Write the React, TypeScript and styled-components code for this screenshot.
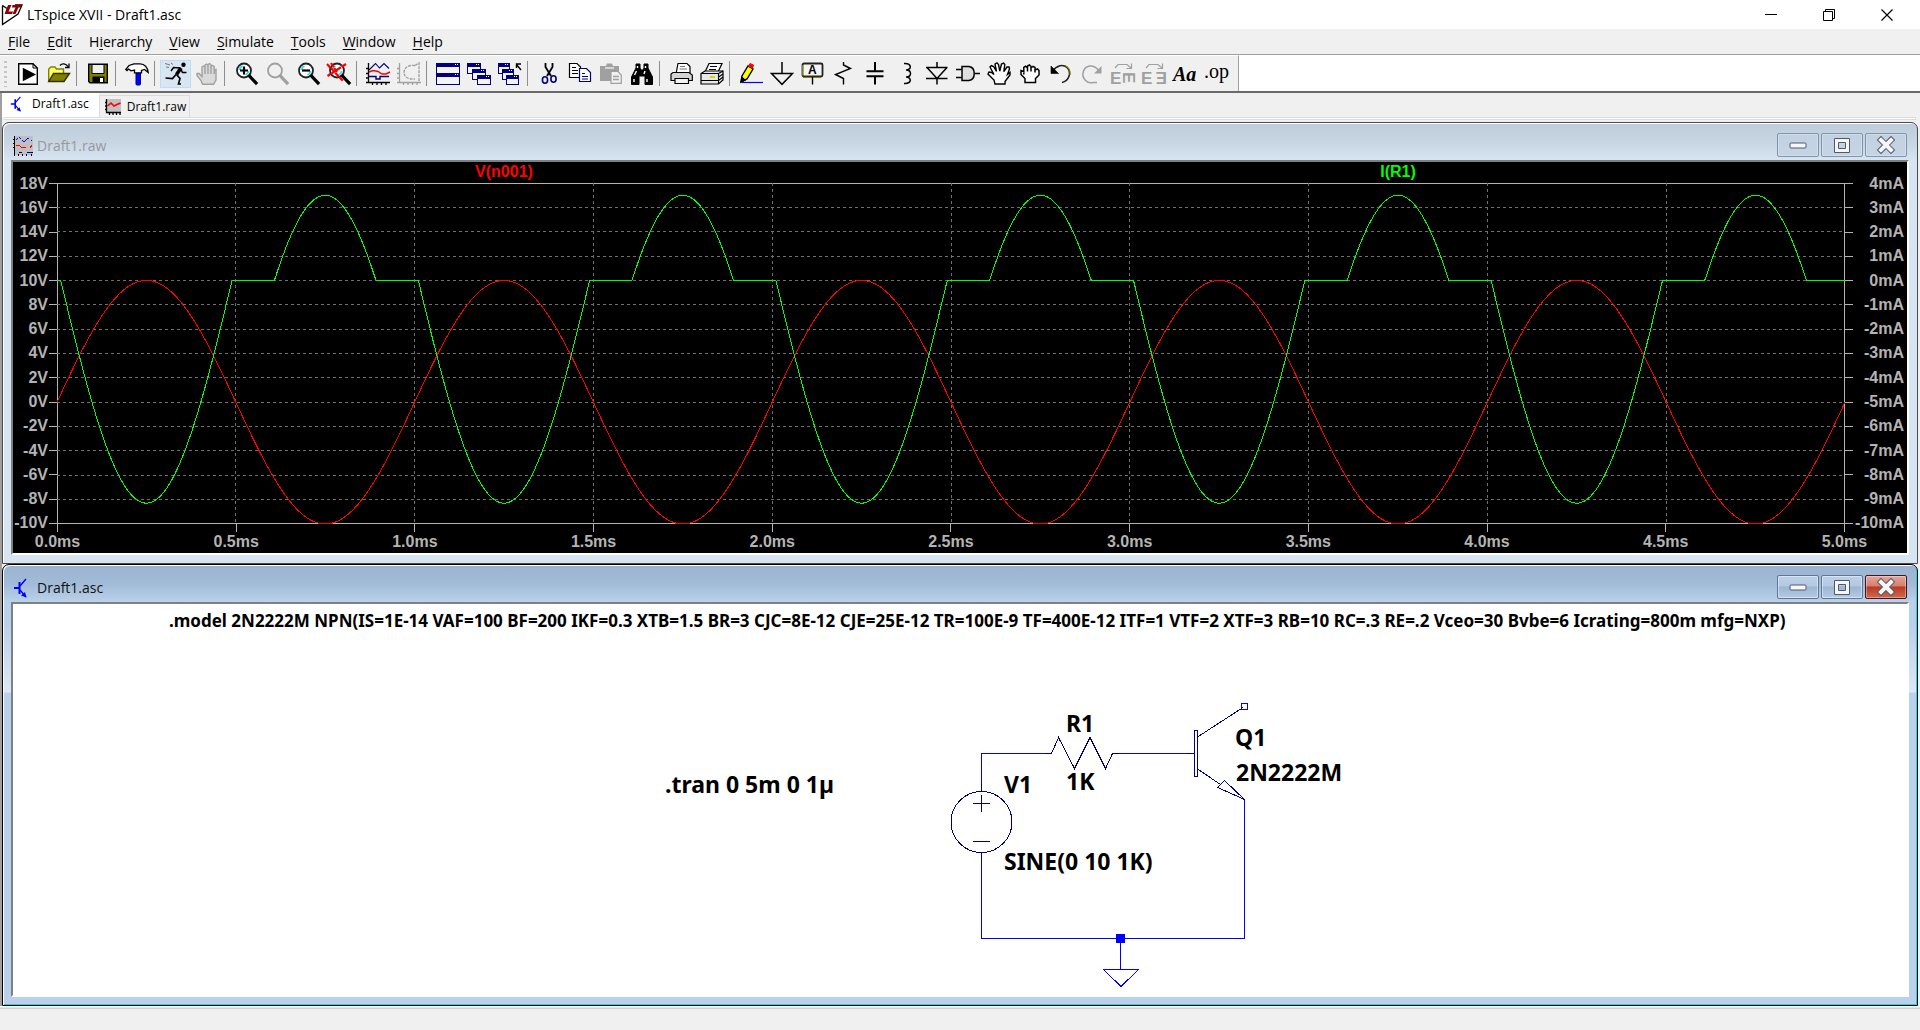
import React from "react";
import styled, { createGlobalStyle, css } from "styled-components";

const UI = `"Open Sans", "Noto Sans", sans-serif`;
const NAVY = "#000080";
const GREY = "#a0a0a0";

const GlobalStyle = createGlobalStyle`
  *, *::before, *::after { box-sizing: border-box; }
  body { margin: 0; background: #f0f0f0; font-family: ${UI}; color: #000; overflow: hidden; }
  button { font: inherit; color: inherit; margin: 0; padding: 0; border: 0; background: none; }
  svg { display: block; }
`;

/* ---------- application frame ---------- */

const Shell = styled.div`
  display: flex;
  flex-direction: column;
  height: 100vh;
`;

const TitleBar = styled.header`
  flex: none;
  display: flex;
  align-items: center;
  height: 29px;
  padding: 0 4px 0 1px;
  background: #fff;
`;

const AppTitle = styled.h1`
  flex: 1;
  margin: 0 0 0 4px;
  font-size: 14px;
  line-height: 20px;
  font-weight: 400;
`;

const CaptionButton = styled.button`
  display: grid;
  place-items: center;
  width: 58px;
  height: 28px;
`;

const MenuBar = styled.nav`
  flex: none;
  display: flex;
  gap: 17px;
  height: 26px;
  padding-left: 8px;
  border-bottom: 1px solid #a0a0a0;
`;

const MenuItem = styled.button`
  font-size: 14px;
  line-height: 24px;
  u {
    text-underline-offset: 2px;
  }
`;

const ToolbarRow = styled.div`
  flex: none;
  display: flex;
  height: 38px;
  background: #fff;
  border-bottom: 2px solid;
  border-image: linear-gradient(#a0a0a0 50%, #696969 50%) 2;
`;

const Toolbar = styled.div`
  display: flex;
  align-items: center;
  padding: 0 7px 0 4px;
  background: #f0f0f0;
  border-top: 1px solid #fff;
  border-right: 1px solid #a0a0a0;
`;

const Grip = styled.span`
  width: 3px;
  height: 26px;
  margin-right: 5px;
  background: repeating-linear-gradient(#c4c4c4 0 2px, transparent 2px 5px);
`;

const Separator = styled.span`
  width: 8px;
  height: 25px;
  background: linear-gradient(#8d8d8d, #8d8d8d) 2px 0 / 1px 100% no-repeat;
`;

const ToolButton = styled.button<{ $on?: boolean }>`
  display: grid;
  place-items: center;
  width: 31px;
  height: 28px;
  border: 1px solid transparent;
  ${(p) =>
    p.$on &&
    css`
      background: #d8e6f2;
      border-color: #c0dcf3;
    `}
`;

const TabStrip = styled.div`
  flex: none;
  display: flex;
  align-items: flex-end;
  height: 24px;
  border-left: 2px solid;
  border-image: linear-gradient(to right, #a0a0a0 50%, #696969 50%) 2;
`;

const Tab = styled.button<{ $active?: boolean }>`
  display: flex;
  align-items: center;
  height: ${(p) => (p.$active ? 24 : 22)}px;
  gap: 6px;
  padding: ${(p) => (p.$active ? "0 10px 2px 8px" : "0 3px 0 5px")};
  background: ${(p) => (p.$active ? "#fff" : "#f0f0f0")};
  border: ${(p) => (p.$active ? "0" : "1px solid #dcdcdc")};
  border-bottom: 0;
  font-size: 12px;
  line-height: 18px;
`;

const TabBase = styled.div`
  flex: none;
  height: 5px;
  padding: 0 4px 2px 2px;
  border-left: 2px solid;
  border-image: linear-gradient(to right, #a0a0a0 50%, #696969 50%) 2;
  &::before {
    content: "";
    display: block;
    height: 3px;
    background: #fff;
    border: 1px solid #dcdcdc;
    border-left: 0;
  }
`;

/* ---------- document windows ---------- */

const Workspace = styled.main`
  flex: 1;
  min-height: 0;
  display: flex;
  flex-direction: column;
  padding-right: 2px;
  border-left: 2px solid;
  border-image: linear-gradient(to right, #a0a0a0 50%, #696969 50%) 2;
`;

const Window = styled.section<{ $active?: boolean }>`
  flex: 1 1 0;
  min-height: 0;
  display: flex;
  flex-direction: column;
  padding: 0 8px 8px;
  border: 1px solid ${(p) => (p.$active ? "#000" : "#4a4a4a")};
  border-radius: 7px 7px 0 0;
  box-shadow: ${(p) =>
    p.$active
      ? "inset 1px 1px 0 #fff, inset -1px -1px 0 #2fcbe3"
      : "inset 1px 1px 0 #fff"};
  background: ${(p) =>
    p.$active
      ? "linear-gradient(#99b3d0 0, #a3bcd8 20px, #b9d1ea 37px, #b9d1ea 60px, #dce8f4 127px, #b9d1ea 128px)"
      : "linear-gradient(#bfcddb 0, #c8d5e2 20px, #d7e4f2 37px)"};
`;

const WindowBar = styled.div`
  flex: none;
  display: flex;
  align-items: center;
  height: 37px;
  gap: 2px;
  padding: 8px 2px 0 2px;
`;

const WindowTitle = styled.h2<{ $active?: boolean }>`
  flex: 1;
  margin: 0 0 0 2px;
  font-size: 14px;
  line-height: 20px;
  font-weight: 400;
  color: ${(p) => (p.$active ? "#111" : "#999")};
`;

const WindowButton = styled.button<{ $look: "idle" | "active" | "close" }>`
  display: grid;
  place-items: center;
  width: 42px;
  height: 24px;
  margin-bottom: 2px;
  border: 1px solid #8393ad;
  border-radius: 2px;
  box-shadow: inset 0 0 0 1px rgba(255, 255, 255, 0.25);
  background: linear-gradient(#c2d1e2, #c5d5e6);
  ${(p) =>
    p.$look === "active" &&
    css`
      border-color: #5f7797;
      box-shadow: inset 0 0 0 1px rgba(255, 255, 255, 0.45);
      background: linear-gradient(#bccfe6 0, #b4c9e2 45%, #9cb5d2 50%, #b4cbe4);
    `}
  ${(p) =>
    p.$look === "close" &&
    css`
      border-color: #431422;
      box-shadow: inset 0 0 0 1px rgba(255, 255, 255, 0.35);
      background: linear-gradient(#e2a698 0, #d6806f 45%, #b93a21 50%, #cf6a4f);
    `}
`;

const Frame = styled.div<{ $dark?: boolean }>`
  flex: 1;
  min-height: 0;
  display: grid;
  border: 2px solid;
  border-color: #808080 #fff #fff #808080;
  background: ${(p) => (p.$dark ? "#000" : "#fff")};
`;

const StatusBar = styled.footer`
  flex: none;
  height: 24px;
  border-top: 1px solid #fff;
  box-shadow: inset 0 1px 0 #e6e6e6, inset 0 2px 0 #d0d0d0;
`;

/* ---------- waveform plot ---------- */

const Chart = styled.div`
  display: grid;
  grid-template: 21px 1fr 29px / 44px 1fr 62px;
  min-height: 0;
  font: 700 16px/18px "Liberation Sans", Arial, sans-serif;
  color: #b4b4b4;
`;

const Legend = styled.div`
  grid-area: 1 / 2;
  display: grid;
  grid-template-columns: 1fr 1fr;
  justify-items: center;
  padding-top: 1px;
`;

const TraceName = styled.button<{ $color: string }>`
  height: 18px;
  color: ${(p) => p.$color};
`;

const Plot = styled.div`
  grid-area: 2 / 2;
  min-height: 0;
  box-shadow: inset 0 0 0 1px #b4b4b4;
  svg {
    width: 100%;
    height: 100%;
    overflow: visible;
  }
`;

const Axis = styled.ol<{ $side: "left" | "right" }>`
  grid-area: 2 / ${(p) => (p.$side === "left" ? 1 : 3)};
  display: flex;
  flex-direction: column;
  justify-content: space-between;
  margin: 0;
  padding: 0;
  list-style: none;
  li {
    display: flex;
    gap: 1px;
    flex-direction: ${(p) => (p.$side === "left" ? "row-reverse" : "row")};
    justify-content: ${(p) => (p.$side === "left" ? "flex-start" : "space-between")};
    align-items: center;
    height: 1px;
    padding-right: ${(p) => (p.$side === "left" ? 0 : 3)}px;
    white-space: nowrap;
  }
  li::before {
    content: "";
    flex: none;
    width: 8px;
    height: 1px;
    background: #b4b4b4;
  }
`;

const TimeAxis = styled.ol`
  grid-area: 3 / 2;
  display: flex;
  justify-content: space-between;
  margin: 0;
  padding: 0;
  list-style: none;
  li {
    display: flex;
    flex-direction: column;
    align-items: center;
    width: 1px;
    white-space: nowrap;
  }
  li::before {
    content: "";
    flex: none;
    width: 1px;
    height: 8px;
    background: #b4b4b4;
  }
  span {
    margin-top: 1px;
  }
`;

const STEPS = 2000;
const T_END = 5;

const nodeVoltage = (t: number) => 10 * Math.sin(2 * Math.PI * t);

/* Base junction conducts above 0.66 V and breaks down below -6.28 V. */
const resistorCurrent = (t: number) => {
  const v = nodeVoltage(t);
  if (v > 0.66) return -(v - 0.66) * 0.979;
  if (v < -6.28) return -(v + 6.28) * 0.94;
  return 0;
};

const trace = (fn: (t: number) => number, max: number, min: number) =>
  Array.from({ length: STEPS + 1 }, (_, i) => {
    const t = (i / STEPS) * T_END;
    const y = ((max - fn(t)) / (max - min)) * 1400;
    return `${(t * 1000).toFixed(1)},${y.toFixed(2)}`;
  }).join(" ");

const VOLTS = Array.from({ length: 15 }, (_, i) => `${18 - 2 * i}V`);
const AMPS = Array.from({ length: 15 }, (_, i) => `${4 - i}mA`);
const TIMES = Array.from({ length: 11 }, (_, i) => `${(i * 0.5).toFixed(1)}ms`);

function WaveformChart() {
  const grid = { stroke: "#707070", strokeDasharray: "3 3", vectorEffect: "non-scaling-stroke" as const };
  const line = { fill: "none", strokeWidth: 1, vectorEffect: "non-scaling-stroke" as const };
  return (
    <Chart>
      <Legend>
        <TraceName $color="#f00">V(n001)</TraceName>
        <TraceName $color="#0f0">I(R1)</TraceName>
      </Legend>
      <Axis $side="left">
        {VOLTS.map((v) => (
          <li key={v}>{v}</li>
        ))}
      </Axis>
      <Plot>
        <svg viewBox="0 0 5000 1400" preserveAspectRatio="none" shapeRendering="crispEdges" role="img" aria-label="Waveforms">
          {VOLTS.slice(1, -1).map((v, i) => (
            <line key={v} x1="0" x2="5000" y1={(i + 1) * 100} y2={(i + 1) * 100} {...grid} />
          ))}
          {TIMES.slice(1, -1).map((t, i) => (
            <line key={t} x1={(i + 1) * 500} x2={(i + 1) * 500} y1="0" y2="1400" {...grid} />
          ))}
          <polyline points={trace(nodeVoltage, 18, -10)} stroke="#f00" {...line} />
          <polyline points={trace(resistorCurrent, 4, -10)} stroke="#0f0" {...line} />
        </svg>
      </Plot>
      <Axis $side="right">
        {AMPS.map((a) => (
          <li key={a}>{a}</li>
        ))}
      </Axis>
      <TimeAxis>
        {TIMES.map((t) => (
          <li key={t}>
            <span>{t}</span>
          </li>
        ))}
      </TimeAxis>
    </Chart>
  );
}

/* ---------- schematic ---------- */

const Drawing = styled.svg`
  width: 100%;
  height: 100%;
  min-height: 0;
  fill: none;
`;

const Label = styled.text<{ $size: number }>`
  font: 700 ${(p) => p.$size}px "Noto Sans", "Open Sans", sans-serif;
  fill: #000;
`;

function Schematic() {
  return (
    <Drawing viewBox="0 0 1894 391" shapeRendering="crispEdges" role="img" aria-label="Schematic">
      <g stroke="#0000ff">
        <path d="M1038 149.5H968.5V187M1105 149.5H1175M968.5 249V334.5H1231.5V195.5M1107.5 334.5V365.5H1090.5L1108 382.5L1125.5 365.5H1107.5" />
        <rect x="1228.5" y="99.5" width="6" height="6" />
        <rect x="1103.5" y="330.5" width="8" height="8" fill="#0000ff" />
      </g>
      <g stroke={NAVY}>
        <path d="M1032 149.5H1038.5L1045.5 133.5L1061.5 164.5L1077 133.5L1092.5 164.5L1099.5 149.5H1106" />
        <circle cx="968.5" cy="218" r="30.5" />
        <path d="M968.5 180V187.5M968.5 249V257M960 199.5H977M968.5 191V208M960 237.5H977" />
        <path d="M1174 149.5H1181.5M1181.5 126.5H1184.5V172.5H1181.5ZM1184.5 133L1230 103.5M1184.5 165L1207.5 180.5M1204.5 183.5L1211.5 176.5L1231.5 195.5Z" />
      </g>
      <Label $size={17} x="156" y="23">
        .model 2N2222M NPN(IS=1E-14 VAF=100 BF=200 IKF=0.3 XTB=1.5 BR=3 CJC=8E-12 CJE=25E-12 TR=100E-9 TF=400E-12 ITF=1 VTF=2 XTF=3 RB=10 RC=.3 RE=.2 Vceo=30 Bvbe=6 Icrating=800m mfg=NXP)
      </Label>
      <Label $size={23} x="652" y="189">.tran 0 5m 0 1µ</Label>
      <Label $size={23} x="1053" y="128">R1</Label>
      <Label $size={23} x="1053" y="186">1K</Label>
      <Label $size={23} x="991" y="189">V1</Label>
      <Label $size={23} x="991" y="266">SINE(0 10 1K)</Label>
      <Label $size={23} x="1222" y="142">Q1</Label>
      <Label $size={23} x="1223" y="177">2N2222M</Label>
    </Drawing>
  );
}

/* ---------- icons ---------- */

const IconBox = styled.svg`
  width: 24px;
  height: 24px;
  overflow: visible;
  fill: none;
  stroke: #000;
  stroke-width: 1.4;
`;

const Lens = ({ grey, children }: { grey?: boolean; children?: React.ReactNode }) => (
  <>
    <circle cx="10" cy="8.5" r="7" fill={grey ? "#f0f0f0" : "#fff"} stroke={grey ? GREY : "#222"} strokeWidth="1.8" />
    {!grey && <path d="M5.5 8a5 5 0 0 1 3-4M14.5 9a5 5 0 0 1-3 4" stroke="#28e0e8" strokeWidth="1.8" />}
    <path d="M15.5 14L22 21" stroke={grey ? GREY : "#000"} strokeWidth="3.2" strokeLinecap="square" />
    {children}
  </>
);

const MiniWindow = ({ x, y, w = 13, h = 10 }: { x: number; y: number; w?: number; h?: number }) => (
  <g shapeRendering="crispEdges">
    <rect x={x + 0.5} y={y + 0.5} width={w} height={h} fill="#f4f4f4" stroke={NAVY} strokeWidth="1" />
    <rect x={x} y={y} width={w + 1} height="4" fill={NAVY} stroke="none" />
    <rect x={x + w - 2} y={y + 1} width="1" height="1" fill="#fff" stroke="none" />
    <rect x={x + w - 4} y={y + 1} width="1" height="1" fill="#fff" stroke="none" />
  </g>
);

const Arc = () => <path d="M4 6L7 2.5H16L20 6M20.5 1.5V6.5H15.5" stroke={GREY} strokeWidth="1.2" />;

const Glyph = styled.text<{ $size: number; $italic?: boolean; $grey?: boolean; $sans?: boolean; $light?: boolean }>`
  font-style: ${(p) => (p.$italic ? "italic" : "normal")};
  font-weight: ${(p) => (p.$light ? 400 : 700)};
  font-size: ${(p) => p.$size}px;
  font-family: ${(p) => (p.$sans ? `"Liberation Sans", sans-serif` : `"Liberation Serif", serif`)};
  fill: ${(p) => (p.$grey ? GREY : "#000")};
  stroke: none;
`;

const ICONS: Record<string, React.ReactNode> = {
  run: (
    <>
      <path d="M2.7 1.7H17L21.3 6V22.3H2.7Z" fill="#fff" />
      <path d="M17 1.7V6H21.3" strokeWidth="1" />
      <path d="M7.5 7L18.5 12.5L7.5 18Z" fill="#000" />
    </>
  ),
  open: (
    <>
      <path d="M1.7 19V7L4 5H8L9.5 7H16.5V11" fill="#ffff60" stroke="#808000" />
      <path d="M1.7 19.5L6.5 11.5H22.5L17 19.5Z" fill="#808000" stroke="#303000" />
      <path d="M13 3.5C15 1 19 1.5 21 4.5M22 1.5V5.5H18" strokeWidth="1.3" />
    </>
  ),
  save: (
    <>
      <path d="M2.7 2.2H21.3V20.8H4L2.7 19.5Z" fill="#808000" stroke="#000" />
      <path d="M6 2.5H18V11.5H6Z" fill="#f0f0f0" strokeWidth="1" />
      <rect x="6.5" y="14.5" width="12" height="6.5" fill="#000" stroke="none" />
      <rect x="14" y="16" width="3" height="4" fill="#fff" stroke="none" />
    </>
  ),
  hammer: (
    <>
      <rect x="11" y="10" width="4.5" height="13" rx="1" fill="#0000ff" stroke={NAVY} strokeWidth="1" />
      <path d="M.8 7.5L4 3.5L9 1.8H15C19.5 2 22.5 5 23.2 10.5L19.5 7.5L16.5 8.5V10.8H9.5V8L6 8.8L3.5 7L2 8.5Z" fill="#fff" strokeWidth="1.3" />
    </>
  ),
  runner: (
    <>
      <circle cx="19.5" cy="2.8" r="2.2" fill="#000" stroke="none" />
      <path d="M17 6L12.5 12.5" strokeWidth="3.6" />
      <path d="M16.5 6L9.5 5.5L7 9M17 7.5L18.5 10.5H22.5" strokeWidth="1.5" />
      <path d="M12 12.5L8.5 16.5L1.5 16M12.5 12.5L16 16.5L14.5 22H17" strokeWidth="1.7" />
      <path d="M1 1.5L6 3M2 5L5 5.5M7 1L9 2.5" stroke="#777" strokeWidth="1" />
    </>
  ),
  halt: (
    <path
      d="M7.5 22.3L6 18.5L2 13.5V11.5H4L7 14.5V5L8.5 4L10 5V12V3L11.5 2L13 3V12V2.5L14.5 1.5L16 2.5V12V4.5L17.5 3.5L19.2 4.5V12V8L21 7.5V18L18.5 22.3Z"
      fill="#dadada"
      stroke={GREY}
    />
  ),
  zoomIn: (
    <Lens>
      <path d="M10 4.5V12.5M6 8.5H14" strokeWidth="2.2" />
    </Lens>
  ),
  zoomArea: <Lens grey />,
  zoomOut: (
    <Lens>
      <path d="M6 8.5H14" strokeWidth="2.2" />
    </Lens>
  ),
  zoomFit: (
    <Lens>
      <path d="M0 2L16 19M19 2L0.5 14M4 1L10 10" stroke="#f00" strokeWidth="2.2" strokeDasharray="5 1" />
    </Lens>
  ),
  wave: (
    <>
      <path d="M2.5 1V20.5H24M0 6.5H2.5M0 11.5H2.5M0 16H2.5M0 20.5H2.5M6.5 20.5V23M11 20.5V23M15.5 20.5V23M20 20.5V23" strokeWidth="1.3" />
      <path d="M3 8L9.5 1.5L13.5 6L18 1.5L23 6.5" stroke={NAVY} strokeWidth="1.1" />
      <path d="M3 10L7 8.5L12 9.5L16 12H20L24 10" stroke="#f00" strokeWidth="1.4" />
      <path d="M3 14.5H10V17H14V14.5H23" stroke={NAVY} strokeWidth="1.4" />
    </>
  ),
  polar: (
    <g stroke={GREY}>
      <path d="M2.5 1V20.5H24M0 6.5H2.5M0 11.5H2.5M0 16H2.5M0 20.5H2.5M6.5 20.5V23M11 20.5V23M15.5 20.5V23M20 20.5V23" strokeWidth="1.3" />
      <path d="M18 3.5C11 2.5 7 6 7 10.5S11 17.5 18 17M18 3.5L22 1V20" strokeDasharray="3 1" />
    </g>
  ),
  tile: (
    <>
      <MiniWindow x={0} y={1} w={23} h={11} />
      <MiniWindow x={0} y={11} w={23} h={11} />
    </>
  ),
  cascade: (
    <>
      <MiniWindow x={0} y={1} />
      <MiniWindow x={5} y={7} />
      <MiniWindow x={10} y={13} h={9} />
    </>
  ),
  closeAll: (
    <>
      <MiniWindow x={0} y={1} w={11} />
      <MiniWindow x={4} y={7} w={11} />
      <MiniWindow x={8} y={13} w={12} h={9} />
      <path d="M23 8L18.5 2.5M18.5 6V2H23" strokeWidth="1.4" />
    </>
  ),
  cut: (
    <>
      <path d="M8.5 1V5L14 14M15.5 1V5L10 14" strokeWidth="1.8" />
      <ellipse cx="8" cy="18" rx="2.6" ry="3.2" stroke={NAVY} strokeWidth="1.6" />
      <ellipse cx="16.5" cy="17" rx="2.6" ry="3.2" stroke={NAVY} strokeWidth="1.6" />
    </>
  ),
  copy: (
    <>
      <path d="M1.5 1.5H9L12.5 5V15.5H1.5Z" fill="#fff" strokeWidth="1.2" />
      <path d="M4 5.5H8M4 8.5H10M4 11.5H10" strokeWidth="1" />
      <path d="M11.5 6.5H18.5L22.5 10.5V19.5H11.5Z" fill="#fff" stroke={NAVY} strokeWidth="1.2" />
      <path d="M14 11.5H17M14 14.5H20M14 17H20" stroke={NAVY} strokeWidth="1" />
    </>
  ),
  paste: (
    <>
      <path d="M1 4H7L8 1.5H13L14 4H20V19H1Z" fill={GREY} stroke="none" />
      <path d="M6 6H15" stroke="#f0f0f0" />
      <path d="M12 9.5H19L22.3 13V21.3H12Z" fill="#f0f0f0" stroke={GREY} strokeWidth="1.2" />
      <path d="M14 14.5H20M14 17.5H20" stroke={GREY} />
    </>
  ),
  find: (
    <>
      <path d="M6 2H10V6L11 8H13L14 6V2H18V6L22.5 15V22.5H15V14H9V22.5H1.5V15L6 6Z" fill="#000" strokeWidth="1" />
      <path d="M7.5 4V6M6.5 9L4.5 13M4 17V20M15.5 4V6M15 9L14 12M17 17V20" stroke="#fff" strokeWidth="1.4" />
    </>
  ),
  print: (
    <>
      <path d="M7 12L9 1.5H18L21 4.5V12" fill="#fff" strokeWidth="1.2" />
      <path d="M11 4.5H16M10.5 7H18" stroke="#777" strokeWidth="1" />
      <path d="M4 10.5H20L23.3 13V18.5H2V12Z" fill="#d4d4d4" strokeWidth="1.2" />
      <path d="M6 16.5H19.5V21.5H6Z" fill="#f4f4f4" strokeWidth="1.2" />
    </>
  ),
  printSetup: (
    <>
      <path d="M5 10L9 1.5H22L18 10" fill="#fff" strokeWidth="1.2" />
      <path d="M10 4.5H17M9 7.5H16" strokeWidth="1" />
      <path d="M1 11.5L5 9H23V18L18.5 22H1Z" fill="#e8e8e8" strokeWidth="1.2" />
      <path d="M1 11.5H18.5V22M18.5 11.5L23 9M18.5 15L23 12M18.5 18.5L23 15M1 18.5H18.5" strokeWidth="1.1" />
      <path d="M10 15H15" stroke="#d8d800" strokeWidth="2" />
    </>
  ),
  wire: (
    <>
      <path d="M2 20L3 14L9 4L14 7L8 17Z" fill="#ff0" />
      <path d="M9.5 4L11 1.5L14.5 3L13.5 6Z" fill="#f00" stroke="#f00" strokeWidth="1" />
      <path d="M2 20L3 15.5L6 18Z" fill="#000" />
      <path d="M3 20.5H24" stroke="#00f" strokeWidth="1.2" />
    </>
  ),
  ground: <path d="M12 0V11.5M1.5 11.5H22.5L12 22.3Z" strokeWidth="1.5" />,
  label: (
    <>
      <rect x="1.5" y="1.5" width="20" height="13" rx="1.5" fill="#f4f4f4" stroke="#222" strokeWidth="1.8" />
      <path d="M1.5 3V13.5M2 15.4H20" stroke="#808000" strokeWidth="1" />
      <path d="M11.5 15V22.5" />
      <Glyph $size={12} $sans x="7" y="12">A</Glyph>
    </>
  ),
  resistor: <path d="M11.5 0V3L18.5 6.5L3.5 12.5L11.5 16.5V22.5" />,
  capacitor: <path d="M12 0V9M12 14.5V22.5M3.5 9.2H20.5M3.5 14.2H20.5" strokeWidth="2" />,
  inductor: <path d="M10 1.5C18 1 18 8 12 8C18 8 18 15 12 15C18 15 18 22 10 21.5" strokeWidth="1.5" />,
  diode: <path d="M12 0V5M12 16.5V22.5M1 5.5H22.5M1 16.5H22.5M2 5.5L12 16.5L22 5.5" strokeWidth="1.5" />,
  gate: (
    <>
      <path d="M6 4.5H13C20 5.5 20 17.5 13 18.5H6Z" fill="#dedede" strokeWidth="1.5" />
      <path d="M0 7.5H6M0 15.5H6M19 11.5H24" strokeWidth="1.5" />
    </>
  ),
  move: (
    <path
      d="M8 22L7 18L1 12L2 10L4.5 10.5L7 12.5L3 5L4.5 3.5L6.5 4.5L9.5 9.5L8 2L10 .8L11.5 2.5L12.8 9L14.5 2L16.5 1L17.8 2.5L16.8 9.5L20 5L22 5L22.5 7L20.5 12.5L23 10.5V13L18 19.5V22Z"
      fill="#fff"
    />
  ),
  drag: (
    <path
      d="M7 20.5V16.5L3 12.5V8.5L5.8 9.5V5.5L7.5 4.3L9.5 6V4L11.5 3L13 4.5V6L15 4.3L17 5.5V8L19.5 7L21 8.5V13L17.5 16.5V20.5ZM9.5 6V9.5M13 6V9.5M17 8V10.5M5.8 9.5V12.5"
      fill="#fff"
      strokeWidth="1.5"
    />
  ),
  undo: (
    <>
      <path d="M3.5 9C8 3 14 2 18 5.5C23 10.5 20 19 13 20.5" stroke="#222" strokeWidth="1.6" />
      <path d="M2 4V11.5H9.5Z" fill="#000" strokeWidth=".6" />
      <path d="M16 3.5C20 5.5 21.5 9.5 21 13" stroke="#808000" strokeWidth="1.2" />
    </>
  ),
  redo: (
    <>
      <path d="M18.5 8C13 2 6 3 3.5 9C1 16 7 22 13 20.5H17" stroke={GREY} strokeWidth="1.6" />
      <path d="M21.5 4V11.5H14Z" fill={GREY} stroke="none" />
    </>
  ),
  rotate: (
    <>
      <Arc />
      <Glyph $size={17} $sans $grey x="-1" y="22">E</Glyph>
      <Glyph $size={17} $sans $grey transform="translate(12 10) rotate(90)">E</Glyph>
    </>
  ),
  mirror: (
    <>
      <Arc />
      <Glyph $size={17} $sans $grey x="-1" y="22">E</Glyph>
      <Glyph $size={17} $sans $grey transform="translate(25 10) rotate(180)">E</Glyph>
    </>
  ),
  text: <Glyph $size={20} $italic x="0" y="19">Aa</Glyph>,
  directive: <Glyph $size={20} $light x="0" y="16">.op</Glyph>,
};

type Tool = { id: string; label: string; on?: boolean; off?: boolean };

const TOOL_GROUPS: Tool[][] = [
  [{ id: "run", label: "New Schematic" }, { id: "open", label: "Open" }],
  [{ id: "save", label: "Save" }],
  [{ id: "hammer", label: "Control Panel" }],
  [{ id: "runner", label: "Run", on: true }, { id: "halt", label: "Halt", off: true }],
  [
    { id: "zoomIn", label: "Zoom in" },
    { id: "zoomArea", label: "Pan", off: true },
    { id: "zoomOut", label: "Zoom back" },
    { id: "zoomFit", label: "Zoom full extents" },
  ],
  [{ id: "wave", label: "Autorange" }, { id: "polar", label: "Plot type", off: true }],
  [
    { id: "tile", label: "Tile Windows" },
    { id: "cascade", label: "Cascade Windows" },
    { id: "closeAll", label: "Close All" },
  ],
  [
    { id: "cut", label: "Cut" },
    { id: "copy", label: "Copy" },
    { id: "paste", label: "Paste", off: true },
    { id: "find", label: "Find" },
  ],
  [{ id: "print", label: "Print" }, { id: "printSetup", label: "Print Setup" }],
  [
    { id: "wire", label: "Wire" },
    { id: "ground", label: "Ground" },
    { id: "label", label: "Label Net" },
    { id: "resistor", label: "Resistor" },
    { id: "capacitor", label: "Capacitor" },
    { id: "inductor", label: "Inductor" },
    { id: "diode", label: "Diode" },
    { id: "gate", label: "Component" },
    { id: "move", label: "Move" },
    { id: "drag", label: "Drag" },
    { id: "undo", label: "Undo" },
    { id: "redo", label: "Redo", off: true },
    { id: "rotate", label: "Rotate", off: true },
    { id: "mirror", label: "Mirror", off: true },
    { id: "text", label: "Text" },
    { id: "directive", label: "SPICE Directive" },
  ],
];

const Logo = () => (
  <svg width="22" height="22" viewBox="0 0 22 22" aria-hidden="true">
    <path d="M1.5 1.5V20.5L17 10L21 1L14 1" fill="none" stroke="#000" strokeWidth="1.3" />
    <path d="M1.5 1.5L6 4.5" stroke="#000" strokeWidth="1.3" />
    <path d="M7 1H10.5L7.5 7.5H12L11 10H3.5Z" fill="#8b0000" />
    <path d="M11.5 1H21L20 3.5H17.5L14.5 10H11.5L14.5 3.5H11Z" fill="#8b0000" />
  </svg>
);

const TransistorIcon = ({ size = 20 }: { size?: number }) => (
  <svg width={size} height={size} viewBox="0 0 20 20" fill="none" stroke="#0000ff" aria-hidden="true">
    <path d="M1 10H6M6.5 4V16" strokeWidth="2" />
    <path d="M7 8L13 1M7 12L13 19" strokeWidth="1.4" />
    <path d="M13.5 19.5L8 17.5L12 14Z" fill="#0000ff" stroke="none" />
  </svg>
);

const WaveTabIcon = () => (
  <svg width="16" height="16" viewBox="0 0 16 16" fill="none" aria-hidden="true">
    <rect x="2" width="14" height="13" fill="#c0c0c0" />
    <path d="M1.5 0V13.5H16M0 3.5H2M0 7H2M0 10.5H2M4.5 13V16M8 13V16M11.5 13V16M15 13V16" stroke="#000" strokeWidth="1.3" />
    <path d="M2.5 7L6 4L9 7L12 5.5L15.5 4" stroke="#f00" strokeWidth="1.6" />
  </svg>
);

const WaveWindowIcon = () => (
  <svg width="20" height="20" viewBox="0 0 20 20" fill="none" shapeRendering="crispEdges" aria-hidden="true">
    <rect x="1" width="19" height="19" fill="#c0c0c0" />
    <path d="M1.5 0V20M0 3.5H1M0 7.5H1M0 11.5H1M5.5 18V20M9.5 18V20M13.5 18V20M18.5 18V20" stroke="#000" />
    <path d="M3 4L6 1L11 6L15 2L19 5" stroke="#00f" strokeDasharray="3 1" />
    <path d="M3 9.5H6L9 11.5H13M17 11.5L19 9.5" stroke="#f00" />
    <path d="M6 16.5H9M14 16.5H20" stroke={NAVY} />
  </svg>
);

const WinMin = () => (
  <svg width="18" height="18" viewBox="0 0 18 18" aria-hidden="true">
    <rect x="1" y="7" width="16" height="5" rx="1" fill="#f6f6f6" stroke="#50586c" />
  </svg>
);
const WinMax = () => (
  <svg width="18" height="18" viewBox="0 0 18 18" aria-hidden="true">
    <path d="M1.5 2.5H16.5V16.5H1.5ZM5.5 6.5V12.5H12.5V6.5Z" fill="#f6f6f6" fillRule="evenodd" stroke="#50586c" />
  </svg>
);
const WinClose = () => (
  <svg width="18" height="18" viewBox="0 0 18 18" strokeLinecap="square" aria-hidden="true">
    <path d="M4 4L14 14M14 4L4 14" stroke="#50586c" strokeWidth="6" />
    <path d="M4 4L14 14M14 4L4 14" stroke="#f6f6f6" strokeWidth="4" />
  </svg>
);

function DocumentWindow(props: { title: string; icon: React.ReactNode; active?: boolean; children: React.ReactNode }) {
  const { title, icon, active, children } = props;
  const look = active ? "active" : "idle";
  return (
    <Window $active={active}>
      <WindowBar>
        {icon}
        <WindowTitle $active={active}>{title}</WindowTitle>
        <WindowButton $look={look} aria-label={`Minimize ${title}`}>
          <WinMin />
        </WindowButton>
        <WindowButton $look={look} aria-label={`Maximize ${title}`}>
          <WinMax />
        </WindowButton>
        <WindowButton $look={active ? "close" : "idle"} aria-label={`Close ${title}`}>
          <WinClose />
        </WindowButton>
      </WindowBar>
      <Frame $dark={!active}>{children}</Frame>
    </Window>
  );
}

/* Each entry is split around its underlined access key. */
const MENUS = [
  ["", "F", "ile"],
  ["", "E", "dit"],
  ["H", "i", "erarchy"],
  ["", "V", "iew"],
  ["", "S", "imulate"],
  ["", "T", "ools"],
  ["", "W", "indow"],
  ["", "H", "elp"],
];

export default function App() {
  return (
    <Shell>
      <GlobalStyle />
      <TitleBar>
        <Logo />
        <AppTitle>LTspice XVII - Draft1.asc</AppTitle>
        <CaptionButton aria-label="Minimize">
          <svg width="12" height="12" viewBox="0 0 12 12" aria-hidden="true">
            <path d="M0 5.5H12" stroke="#000" />
          </svg>
        </CaptionButton>
        <CaptionButton aria-label="Restore">
          <svg width="12" height="12" viewBox="0 0 12 12" fill="none" stroke="#000" aria-hidden="true">
            <path d="M.5 2.5H9.5V11.5H.5ZM2.5 2V.5H11.5V9.5H10" />
          </svg>
        </CaptionButton>
        <CaptionButton aria-label="Close">
          <svg width="12" height="12" viewBox="0 0 12 12" aria-hidden="true">
            <path d="M.5.5L11.5 11.5M11.5.5L.5 11.5" stroke="#000" strokeWidth="1.2" />
          </svg>
        </CaptionButton>
      </TitleBar>
      <MenuBar aria-label="Menu">
        {MENUS.map(([pre, key, post]) => (
          <MenuItem key={pre + key + post}>
            {pre}
            <u>{key}</u>
            {post}
          </MenuItem>
        ))}
      </MenuBar>
      <ToolbarRow>
        <Toolbar role="toolbar" aria-label="Tools">
          <Grip />
          {TOOL_GROUPS.map((group, i) => (
            <React.Fragment key={group[0].id}>
              {i > 0 && <Separator />}
              {group.map((tool) => (
                <ToolButton key={tool.id} $on={tool.on} disabled={tool.off} aria-label={tool.label}>
                  <IconBox viewBox="0 0 24 24">{ICONS[tool.id]}</IconBox>
                </ToolButton>
              ))}
            </React.Fragment>
          ))}
        </Toolbar>
      </ToolbarRow>
      <TabStrip role="tablist">
        <Tab $active role="tab" aria-selected="true">
          <TransistorIcon size={16} />
          Draft1.asc
        </Tab>
        <Tab role="tab" aria-selected="false">
          <WaveTabIcon />
          Draft1.raw
        </Tab>
      </TabStrip>
      <TabBase />
      <Workspace>
        <DocumentWindow title="Draft1.raw" icon={<WaveWindowIcon />}>
          <WaveformChart />
        </DocumentWindow>
        <DocumentWindow title="Draft1.asc" icon={<TransistorIcon />} active>
          <Schematic />
        </DocumentWindow>
      </Workspace>
      <StatusBar />
    </Shell>
  );
}
